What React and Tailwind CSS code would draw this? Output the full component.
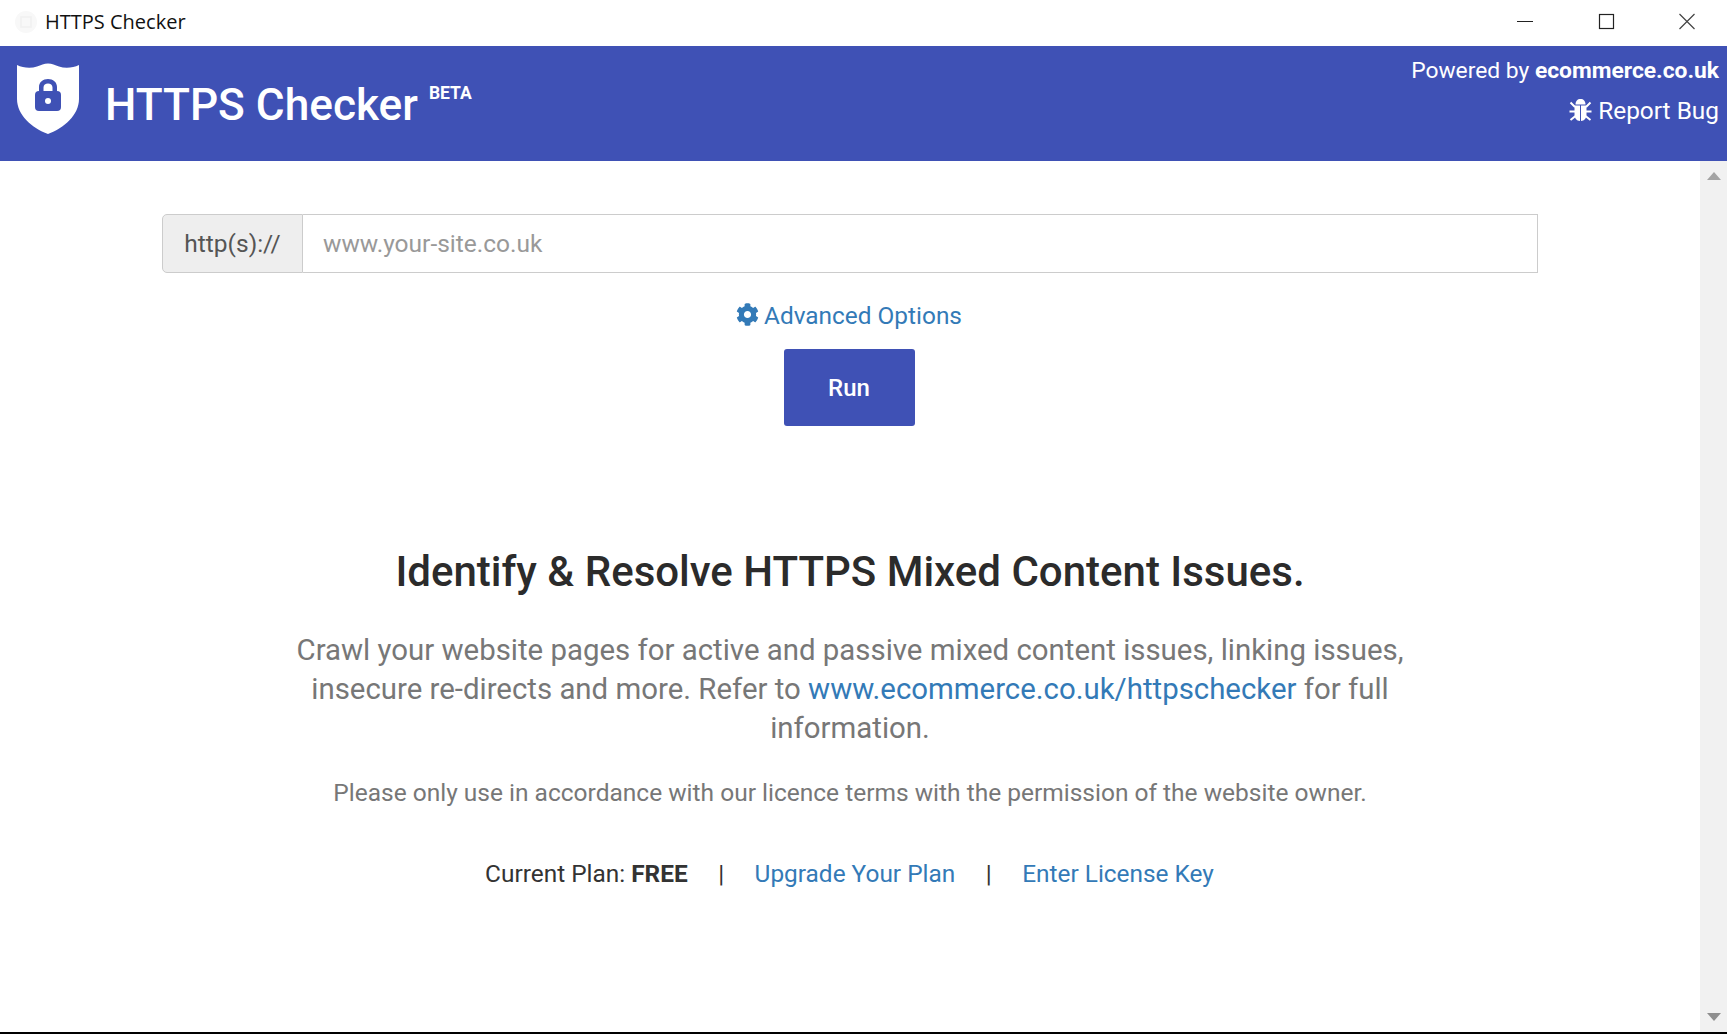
import React from "react";
import { FaCog } from "react-icons/fa";

function Shield() {
  return (
    <svg width="64" height="72" viewBox="0 0 64 72" className="block">
      <path d="M1 2 C7 5 15 5.5 21 3.5 C25 2 28 0.5 32 0.5 C36 0.5 39 2 43 3.5 C49 5.5 57 5 63 2 L63 36 C63 52 48 65 32 71 C16 65 1 52 1 36 Z" fill="#fff" />
      <path d="M23 29 V24 C23 19 27 16 32 16 C37 16 41 19 41 24 V29 M27.5 29 V24.5 C27.5 22 29.5 20.5 32 20.5 C34.5 20.5 36.5 22 36.5 24.5 V29 Z" fill="#3f51b5" fillRule="evenodd" />
      <rect x="19" y="28" width="26" height="20" rx="4" fill="#3f51b5" />
      <circle cx="32" cy="38" r="3" fill="#fff" />
    </svg>
  );
}

function Bug() {
  return (
    <svg width="23" height="24" viewBox="0 0 23 24" className="block">
      <path d="M6.5 6.5 C6.5 3 8.5 1 11.5 1 C14.5 1 16.5 3 16.5 6.5 Z" fill="#fff" />
      <path d="M5.5 7.5 H11 V23 C7.5 22.8 5.5 20 5.5 16 Z M12 7.5 H17.5 V16 C17.5 20 15.5 22.8 12 23 Z" fill="#fff" />
      <path d="M1.5 4.5 L6 9 M21.5 4.5 L17 9 M0.5 13.5 H6 M22.5 13.5 H17 M1.5 22 L6.5 18 M21.5 22 L16.5 18" stroke="#fff" strokeWidth="2" fill="none" />
    </svg>
  );
}

export default function App() {
  return (
    <div className="h-[1034px] w-[1727px] overflow-hidden flex flex-col bg-white font-['Roboto',sans-serif] border-b-2 border-black">
      <div className="h-[46px] shrink-0 flex items-center justify-between bg-white">
        <div className="flex items-center pl-[13px] pb-[2px] text-[20px] text-[#111] font-['Open_Sans',sans-serif]">
          <svg width="32" height="26" viewBox="0 0 32 26" className="block"><circle cx="13" cy="13" r="11" fill="#f8f8f8" /><rect x="8" y="8" width="10" height="10" fill="none" stroke="#f0f0f0" strokeWidth="1.5" /></svg>
          HTTPS Checker
        </div>
        <div className="flex items-center pb-[5px]">
          <svg width="81" height="40" viewBox="0 0 81 40"><path d="M32 20.5 H48" stroke="#222" strokeWidth="1" /></svg>
          <svg width="81" height="40" viewBox="0 0 81 40"><rect x="33.5" y="13.5" width="14" height="14" fill="none" stroke="#222" strokeWidth="1.2" /></svg>
          <svg width="80" height="40" viewBox="0 0 80 40"><path d="M32.5 13 L47.5 28 M47.5 13 L32.5 28" stroke="#444" strokeWidth="1.2" /></svg>
        </div>
      </div>
      <header className="h-[115px] shrink-0 bg-[#3f51b5] flex justify-between text-white">
        <div className="flex items-start pl-[16px] pt-[17px]">
          <Shield />
          <h1 className="ml-[25px] mt-[14px] text-[44.2px] leading-[56px] font-medium">HTTPS Checker</h1>
          <span className="ml-[11px] mt-[19px] text-[17.5px] leading-[22px] font-bold">BETA</span>
        </div>
        <div className="flex flex-col items-end pr-[8px] pt-[5px] leading-[39.5px]">
          <div className="text-[22.8px]">Powered by <b className="font-bold">ecommerce.co.uk</b></div>
          <div className="flex items-center gap-[6px] text-[24.4px]"><Bug />Report Bug</div>
        </div>
      </header>
      <div className="flex-1 flex min-h-0">
        <main className="flex-1 flex flex-col items-center pt-[53px]">
          <div className="w-[1376px] h-[59px] flex text-[24.5px]">
            <div className="w-[141px] shrink-0 flex items-center justify-center pt-[1px] bg-[#eeeeee] border border-[#cccccc] rounded-l-[5px] text-[#555]">http(s)://</div>
            <input placeholder="www.your-site.co.uk" className="flex-1 px-[20px] pt-[1px] border border-l-0 border-[#cccccc] outline-none placeholder:text-[#999] text-[#555]" />
          </div>
          <a className="mt-[23px] mr-[2px] flex items-center gap-[5px] text-[24.4px] leading-[40px] text-[#337ab7]"><FaCog className="w-[23px] h-[23px] -mt-[3px]" />Advanced Options</a>
          <button className="mt-[13px] mr-[2px] w-[131px] h-[77px] bg-[#3f51b5] text-white text-[24px] font-medium rounded-[3px]">Run</button>
          <h2 className="mt-[123px] text-[42px] leading-[46px] font-medium text-[#2b2b2b]">Identify &amp; Resolve HTTPS Mixed Content Issues.</h2>
          <p className="mt-[36px] w-[1150px] text-center text-[29.4px] leading-[39px] text-[#777]">
            Crawl your website pages for active and passive mixed content issues, linking issues, insecure re-directs and more. Refer to <a className="text-[#337ab7]">www.ecommerce.co.uk/httpschecker</a> for full information.
          </p>
          <p className="mt-[28px] text-[24.5px] leading-[34px] text-[#777]">Please only use in accordance with our licence terms with the permission of the website owner.</p>
          <div className="mt-[47px] mr-[1px] flex items-center text-[24.4px] leading-[34px] text-[#333]">
            <span>Current Plan: <b>FREE</b></span>
            <span className="mx-[30.5px]">|</span>
            <a className="text-[#337ab7]">Upgrade Your Plan</a>
            <span className="mx-[30.5px]">|</span>
            <a className="text-[#337ab7]">Enter License Key</a>
          </div>
        </main>
        <div className="w-[27px] shrink-0 bg-[#f1f1f1] flex flex-col justify-between items-center py-[11px]">
          <svg width="14" height="8" viewBox="0 0 14 8"><path d="M7 0 L14 8 H0 Z" fill="#a3a3a3" /></svg>
          <svg width="14" height="8" viewBox="0 0 14 8"><path d="M7 8 L14 0 H0 Z" fill="#8f8f8f" /></svg>
        </div>
      </div>
    </div>
  );
}
